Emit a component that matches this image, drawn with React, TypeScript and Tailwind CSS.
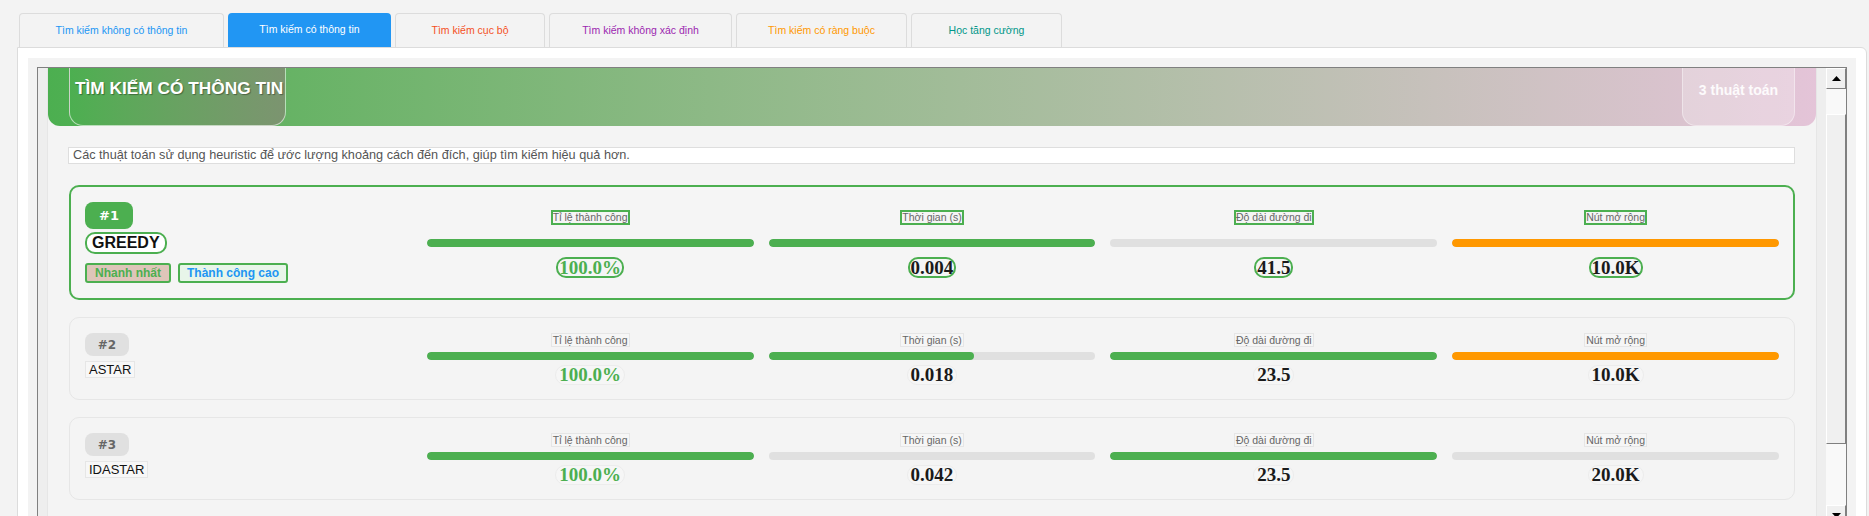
import React from "react";

type Metric = { label: string; pct: number; orange?: boolean; value: string; green?: boolean };
type Card = { rank: number; name: string; selected?: boolean; metrics: Metric[] };

const tabs = [
  { label: "Tìm kiếm không có thông tin", w: "w-[205px]", text: "text-[#2196f3]", active: false },
  { label: "Tìm kiếm có thông tin", w: "w-[163px]", text: "text-white", active: true },
  { label: "Tìm kiếm cục bộ", w: "w-[150px]", text: "text-[#f4511e]", active: false },
  { label: "Tìm kiếm không xác định", w: "w-[183px]", text: "text-[#9c27b0]", active: false },
  { label: "Tìm kiếm có ràng buộc", w: "w-[171px]", text: "text-[#ff9800]", active: false },
  { label: "Học tăng cường", w: "w-[151px]", text: "text-[#009688]", active: false },
];

const cards: Card[] = [
  {
    rank: 1,
    name: "GREEDY",
    selected: true,
    metrics: [
      { label: "Tỉ lệ thành công", pct: 100, value: "100.0%", green: true },
      { label: "Thời gian (s)", pct: 100, value: "0.004" },
      { label: "Độ dài đường đi", pct: 0, value: "41.5" },
      { label: "Nút mở rộng", pct: 100, orange: true, value: "10.0K" },
    ],
  },
  {
    rank: 2,
    name: "ASTAR",
    metrics: [
      { label: "Tỉ lệ thành công", pct: 100, value: "100.0%", green: true },
      { label: "Thời gian (s)", pct: 63, value: "0.018" },
      { label: "Độ dài đường đi", pct: 100, value: "23.5" },
      { label: "Nút mở rộng", pct: 100, orange: true, value: "10.0K" },
    ],
  },
  {
    rank: 3,
    name: "IDASTAR",
    metrics: [
      { label: "Tỉ lệ thành công", pct: 100, value: "100.0%", green: true },
      { label: "Thời gian (s)", pct: 0, value: "0.042" },
      { label: "Độ dài đường đi", pct: 100, value: "23.5" },
      { label: "Nút mở rộng", pct: 0, value: "20.0K" },
    ],
  },
];

function MetricCell({ m, selected }: { m: Metric; selected?: boolean }) {
  return (
    <div className={selected ? "flex flex-col items-center pt-[8px]" : "flex flex-col items-center"}>
      <div
        className={
          selected
            ? "h-[15px] border-2 border-[#4caf50] text-[10.5px] leading-[11px] text-[#666] px-0"
            : "h-[14px] border border-[#e6e6e6] bg-[#f6f6f6] text-[10.5px] leading-[12px] text-[#666] px-[1px]"
        }
      >
        {m.label}
      </div>
      <div
        className={
          selected
            ? "mt-[14px] w-full h-[8px] rounded-full bg-[#e0e0e0] overflow-hidden"
            : "mt-[5px] w-full h-[8px] rounded-full bg-[#e0e0e0] overflow-hidden"
        }
      >
        <div
          className={m.orange ? "h-full rounded-full bg-[#ff9800]" : "h-full rounded-full bg-[#4caf50]"}
          style={{ width: `${m.pct}%` }}
        />
      </div>
      <div
        className={
          (selected
            ? "mt-[10px] h-[21px] border-2 border-[#4caf50] rounded-[10px] px-[1px] leading-[17px] "
            : "mt-[5px] h-[20px] border border-[#ececec] bg-[#f6f6f6] rounded-[10px] px-[3px] leading-[18px] ") +
          "font-['Liberation_Serif',serif] font-bold text-[19px] " +
          (m.green ? "text-[#4caf50]" : "text-[#1a1a1a]")
        }
      >
        {m.value}
      </div>
    </div>
  );
}

function CardView({ c }: { c: Card }) {
  if (c.selected) {
    return (
      <div className="border-2 border-[#4caf50] rounded-[10px] bg-[#f5f5f5] px-[14px] py-[15px] grid grid-cols-5 gap-x-[15px] items-start">
        <div className="flex flex-col items-start">
          <div className="w-[48px] h-[27px] rounded-[8px] bg-[#4caf50] flex items-center justify-center text-white font-bold text-[13px] font-['DejaVu_Sans',sans-serif]">
            #{c.rank}
          </div>
          <div className="mt-[3px] h-[22px] border-2 border-[#4caf50] rounded-[10px] bg-white px-[5px] text-[16px] leading-[18px] font-bold text-[#111]">
            {c.name}
          </div>
          <div className="mt-[9px] flex gap-[7px]">
            <div className="h-[20px] border-2 border-[#4caf50] rounded-[3px] bg-[#dec5b9] px-[8px] text-[12px] leading-[16px] font-bold text-[#4caf50]">
              Nhanh nhất
            </div>
            <div className="h-[20px] border-2 border-[#4caf50] rounded-[3px] bg-[#e8f5e9] px-[7px] text-[12px] leading-[16px] font-bold text-[#2196f3]">
              Thành công cao
            </div>
          </div>
        </div>
        {c.metrics.map((m, i) => (
          <MetricCell key={i} m={m} selected />
        ))}
      </div>
    );
  }
  return (
    <div className="border border-[#e6e6e6] rounded-[10px] bg-[#f4f4f4] px-[15px] pt-[15px] pb-[14px] grid grid-cols-5 gap-x-[15px] items-start">
      <div className="flex flex-col items-start">
        <div className="w-[44px] h-[23px] rounded-[8px] bg-[#e0e0e0] flex items-center justify-center text-[#666] font-bold text-[12px] font-['DejaVu_Sans',sans-serif]">
          #{c.rank}
        </div>
        <div className="mt-[5px] h-[17px] border border-[#e6e6e6] bg-[#f7f7f7] px-[3px] text-[13px] leading-[15px] text-[#111]">
          {c.name}
        </div>
      </div>
      {c.metrics.map((m, i) => (
        <MetricCell key={i} m={m} />
      ))}
    </div>
  );
}

function Arrow({ up }: { up?: boolean }) {
  return (
    <svg width="9" height="5" viewBox="0 0 9 5">
      {up ? <polygon points="0,5 9,5 4.5,0" fill="#000" /> : <polygon points="0,0 9,0 4.5,5" fill="#000" />}
    </svg>
  );
}

export default function App() {
  return (
    <div className="w-[1869px] h-[516px] overflow-hidden bg-[#f3f3f3] font-['Liberation_Sans',Arial,sans-serif]">
      {/* tabs */}
      <div className="flex gap-[4px] pl-[19px] pt-[13px] h-[47px]">
        {tabs.map((t, i) => (
          <div
            key={i}
            className={
              t.w +
              " h-[34px] rounded-t-[4px] flex items-center justify-center text-[10.5px] " +
              t.text +
              (t.active ? " bg-[#2196f3]" : " bg-[#f3f3f3] border border-b-0 border-[#dcdcdc]")
            }
          >
            {t.label}
          </div>
        ))}
      </div>

      {/* panel */}
      <div className="ml-[17px] w-[1850px] h-[480px] bg-white border border-[#dcdcdc] rounded-tr-[6px] px-[10px] pt-[10px]">
        <div className="bg-[#f3f3f3] h-full px-[9px] pt-[9px]">
          <div className="flex h-full border-t border-l border-[#808080]">
            {/* scroll content */}
            <div className="flex-1 bg-[#eeeeee] px-[9px]">
              <div className="h-full bg-[#f4f4f4] border-x border-[#e6e6e6]">
                {/* header */}
                <div className="h-[58px] rounded-b-[12px] bg-gradient-to-r from-[#4caf50] to-[#e4c4d8] flex justify-between px-[21px]">
                  <div className="w-[217px] h-full border border-t-0 border-white/60 rounded-b-[14px] bg-gradient-to-r from-[#4caf50] to-[#7c9470] pl-[5px] pt-[10px]">
                    <div className="text-white font-bold text-[17.3px] leading-[20px] [text-shadow:1px_1px_1px_rgba(0,0,0,0.35)]">
                      TÌM KIẾM CÓ THÔNG TIN
                    </div>
                  </div>
                  <div className="w-[113px] h-full border border-t-0 border-white/40 rounded-b-[14px] bg-white/25 pt-[10px] text-center">
                    <span className="text-white/90 font-bold text-[14px] leading-[20px]">3 thuật toán</span>
                  </div>
                </div>

                {/* description */}
                <div className="mt-[21px] ml-[20px] mr-[21px] h-[17px] bg-white border border-[#dedede] pl-[4px] text-[12.7px] leading-[15px] text-[#555]">
                  Các thuật toán sử dụng heuristic để ước lượng khoảng cách đến đích, giúp tìm kiếm hiệu quả hơn.
                </div>

                {/* cards */}
                <div className="mt-[21px] ml-[21px] mr-[21px] flex flex-col gap-[17px]">
                  {cards.map((c) => (
                    <CardView key={c.rank} c={c} />
                  ))}
                </div>
              </div>
            </div>

            {/* scrollbar */}
            <div className="w-[21px] flex flex-col border-r border-[#808080] bg-[#f9f9f9]">
              <div className="h-[21px] bg-[#f0f0f0] border-t border-l border-white border-r border-b border-r-[#808080] border-b-[#808080] flex items-center justify-center">
                <Arrow up />
              </div>
              <div className="h-[25px]" />
              <div className="h-[331px] bg-[#f0f0f0] border-t border-l border-white border-r border-b border-r-[#808080] border-b-[#808080]" />
              <div className="h-[61px]" />
              <div className="h-[21px] bg-[#f0f0f0] border-t border-l border-white border-r border-b border-r-[#808080] border-b-[#808080] flex items-center justify-center">
                <Arrow />
              </div>
            </div>
          </div>
        </div>
      </div>
    </div>
  );
}
